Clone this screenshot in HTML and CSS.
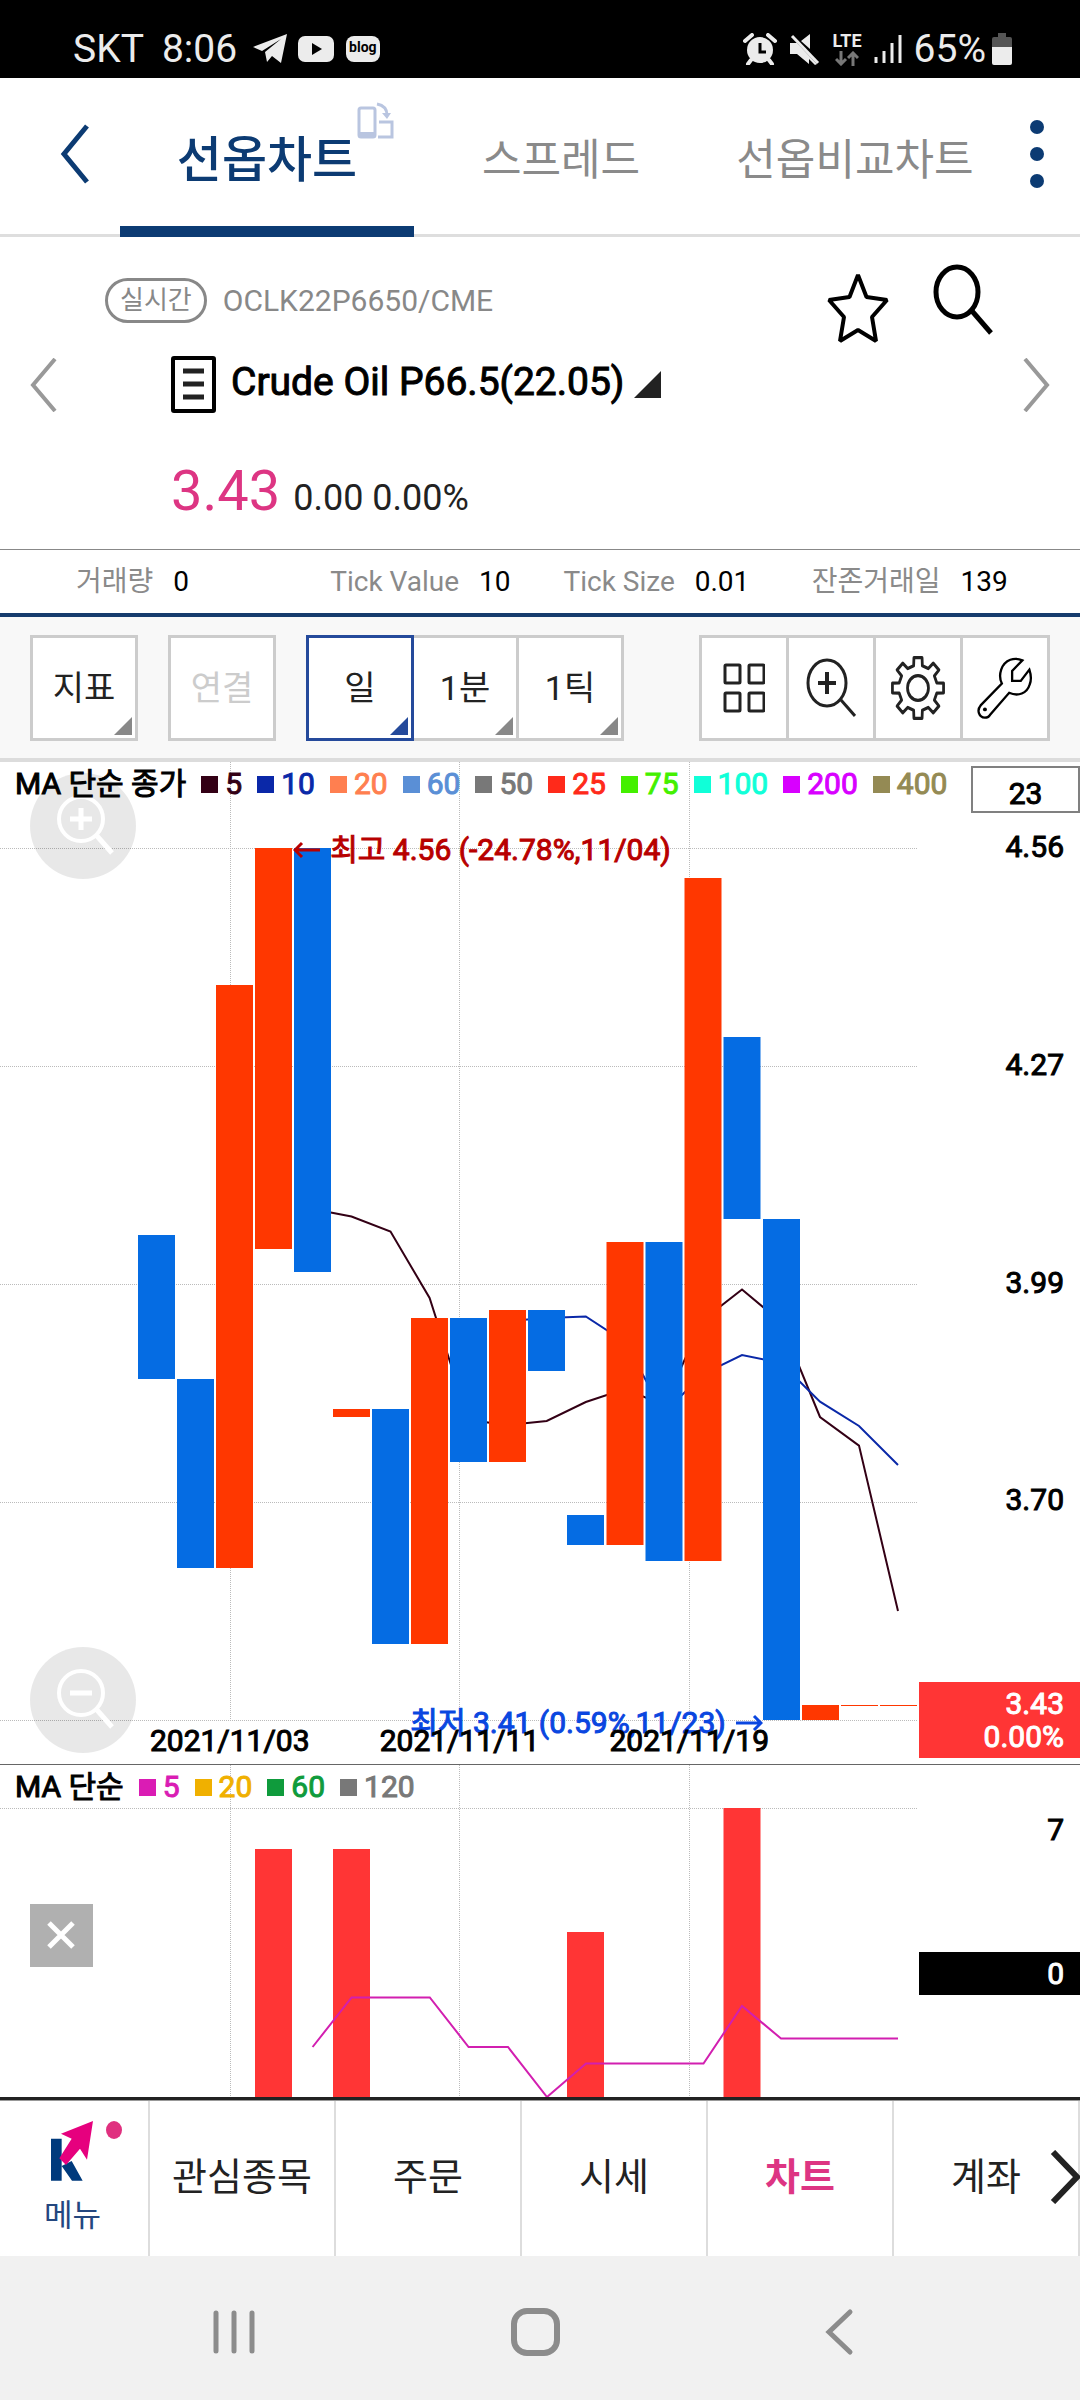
FILE: index.html
```html
<!DOCTYPE html>
<html lang="ko">
<head>
<meta charset="utf-8">
<meta name="viewport" content="width=device-width, initial-scale=1">
<title>선옵차트</title>
<link rel="stylesheet" href="styles.css">
</head>
<body>
<div class="app">
  <div class="status">
    <span>SKT</span>
    <span class="status-time">8:06</span>
    <svg class="status-telegram" width="35" height="30" viewBox="0 0 35 30"><path d="M34 0 28 29 19 22 14 28 12 18 28 5 9 17 0 13Z" fill="#ececec"/></svg>
    <svg class="status-youtube" width="36" height="28" viewBox="0 0 36 28"><rect y="1" width="36" height="26" rx="7" fill="#ececec"/><path d="M14 8 24 14 14 20Z" fill="#000"/></svg>
    <span class="blog">blog</span>
    <div class="status-right">
      <svg width="34" height="32" viewBox="0 0 34 32"><path d="M2 8 9 2M25 2l7 6M8 27l-3 4M26 27l3 4" stroke="#ececec" stroke-width="4" stroke-linecap="round"/><circle cx="17" cy="17" r="13" fill="#ececec"/><path d="M17 10v9h6" fill="none" stroke="#000" stroke-width="3"/></svg>
      <svg width="32" height="32" viewBox="0 0 32 32"><path d="M1 10h7L28 31 26 32 20 26V31L8 21H1ZM21 1V16L12 8Z" fill="#ececec"/><path d="M3 3 29 30" stroke="#ececec" stroke-width="3"/></svg>
      <span class="lte"><span>LTE</span><svg width="24" height="15" viewBox="0 0 24 15"><path d="M6 0v13M1 8l5 5 5-5M18 15V2M13 7l5-5 5 5" fill="none" stroke="#777" stroke-width="3"/></svg></span>
      <svg width="28" height="30" viewBox="0 0 28 30"><path d="M2 23v6M10 17v12M18 9v20M26 1v28" stroke="#ececec" stroke-width="3"/></svg>
      <span class="percent">65%</span>
      <svg width="20" height="32" viewBox="0 0 20 32"><path d="M6 0h8v4h4q2 0 2 2v8H0V6q0-2 2-2h4Z" fill="#555"/><path d="M0 14h20v16q0 2-2 2H2q-2 0-2-2Z" fill="#ececec"/></svg>
    </div>
  </div>

  <header class="tabs">
    <button class="back" aria-label="뒤로"><svg width="30" height="60" viewBox="0 0 30 60"><path d="M27 2 4 30 27 58" fill="none" stroke="#0c3b73" stroke-width="5"/></svg></button>
    <nav class="tab-list">
      <a class="tab active" href="#chart">선옵차트<svg class="rotate" width="38" height="38" viewBox="0 0 38 38"><g fill="none" stroke="#b9c5e0" stroke-width="3"><rect x="2" y="6" width="16" height="29" rx="2"/><path d="M22 20h13v15H21M20 2q10 2 10 11"/></g><path d="M2 30h16v5H2ZM25 11h9l-4 6Z" fill="#b9c5e0"/></svg></a>
      <a class="tab" href="#spread">스프레드</a>
      <a class="tab" href="#compare">선옵비교차트</a>
    </nav>
    <button class="more" aria-label="더보기"><svg width="14" height="68" viewBox="0 0 14 68" fill="#0c3b73"><circle cx="7" cy="7" r="7"/><circle cx="7" cy="34" r="7"/><circle cx="7" cy="61" r="7"/></svg></button>
  </header>

  <section class="quote">
    <div class="quote-top">
      <span class="badge">실시간</span>
      <span class="code">OCLK22P6650/CME</span>
      <button class="star" aria-label="관심종목 추가"><svg width="62" height="72" viewBox="0 0 62 72"><path d="M31 3 39.500 25 60 28 45 45 49 69 31 58 13 69 17 45 2 28 22.500 25Z" fill="none" stroke="#000" stroke-width="4" stroke-linejoin="bevel"/></svg></button>
      <button class="search" aria-label="검색"><svg width="61" height="72" viewBox="0 0 61 72"><g fill="none" stroke="#000" stroke-width="5"><ellipse cx="24" cy="28" rx="21" ry="25"/><path d="M39 47 58 69"/></g></svg></button>
    </div>
    <div class="quote-name">
      <button aria-label="이전 종목"><svg width="27" height="54" viewBox="0 0 27 54"><path d="M25 1 3 27 25 53" fill="none" stroke="#999" stroke-width="4"/></svg></button>
      <button class="symbol"><svg width="45" height="57" viewBox="0 0 45 57"><rect x="2" y="2" width="41" height="53" rx="1" fill="none" stroke="#000" stroke-width="4"/><path d="M12 15h21M12 28h21M12 41h21" stroke="#222" stroke-width="5"/></svg><span>Crude Oil P66.5(22.05)</span><svg class="symbol-corner" width="27" height="27" viewBox="0 0 27 27"><path d="M27 0V27H0Z" fill="#222"/></svg></button>
      <button aria-label="다음 종목"><svg width="27" height="54" viewBox="0 0 27 54"><path d="M2 1 24 27 2 53" fill="none" stroke="#999" stroke-width="4"/></svg></button>
    </div>
    <div class="quote-price"><strong>3.43</strong><span>0.00 0.00%</span></div>
  </section>

  <dl class="stats">
    <div><dt>거래량</dt><dd>0</dd></div>
    <div><dt>Tick Value</dt><dd>10</dd></div>
    <div><dt>Tick Size</dt><dd>0.01</dd></div>
    <div><dt>잔존거래일</dt><dd>139</dd></div>
  </dl>

  <div class="toolbar">
    <button class="tool corner">지표</button>
    <button class="tool" disabled>연결</button>
    <div class="periods">
      <button class="tool corner selected">일</button>
      <button class="tool corner">1분</button>
      <button class="tool corner">1틱</button>
    </div>
    <div class="icons">
      <button aria-label="분할"><svg width="42" height="50" viewBox="0 0 42 50"><g fill="none" stroke="#222" stroke-width="3"><rect x="2" y="2" width="15" height="18" rx="1"/><rect x="26" y="2" width="15" height="18" rx="1"/><rect x="2" y="30" width="15" height="18" rx="1"/><rect x="26" y="30" width="15" height="18" rx="1"/></g></svg></button>
      <button aria-label="확대"><svg width="50" height="60" viewBox="0 0 50 60"><g fill="none" stroke="#222" stroke-width="3"><ellipse cx="21" cy="25" rx="19" ry="23"/><path d="M35 42 49 58"/><path d="M21 14v22M12 25h18" stroke-width="4"/></g></svg></button>
      <button aria-label="설정"><svg width="54" height="64" viewBox="-49 -49 98 98" preserveAspectRatio="none"><g fill="none" stroke="#222" stroke-width="5" stroke-linejoin="round"><path d="M-7.400-46.400 7.400-46.400 7.900-34.100 18.500-29.700 27.600-38 38-27.600 29.700-18.500 34.100-7.900 46.400-7.400 46.400 7.400 34.100 7.900 29.700 18.500 38 27.600 27.600 38 18.500 29.700 7.900 34.100 7.400 46.400-7.400 46.400-7.900 34.100-18.500 29.700-27.600 38-38 27.600-29.700 18.500-34.100 7.900-46.400 7.400-46.400-7.400-34.100-7.900-29.700-18.500-38-27.600-27.600-38-18.500-29.700-7.900-34.100Z"/><circle r="19"/></g></svg></button>
      <button aria-label="도구"><svg width="56" height="62" viewBox="862 112 167 187"><path d="M998 122C975 112 945 118 934 150C928 168 930 180 936 192L872 258C860 272 866 294 885 295C893 295 898 290 900 287L958 220C985 232 1012 222 1020 195C1026 180 1024 165 1019 150L993 184H967V154Z" fill="none" stroke="#000" stroke-width="7"/><circle cx="885" cy="270" r="6"/></svg></button>
    </div>
  </div>

  <main class="charts">
    <section class="pane">
      <div class="plot">
        <svg class="canvas" viewBox="0 0 919 1002" preserveAspectRatio="none">
          <path class="grid" d="M230.500 0V958M459.500 0V958M689.500 0V958M0 86.500H917M0 304.500H917M0 522.500H917M0 740.500H917M0 958.500H917"/>
          <path class="line" stroke="#330015" d="M312.500 447 351.500 454.500 390.500 469.500 429.600 536 468.600 658 507.700 663 546.700 659 585.800 640 624.800 627 663.900 643 703 558 742 527.500 781 560 820 655 859 683.600 898 849"/>
          <path class="line" stroke="#0a28a8" d="M507.700 559 546.700 556 585.800 554.500 624.800 580 663.900 651 703 612 742 593 781 601 820 639.600 859 664 898 703"/>
          <g fill="#ff3700">
            <rect x="216" y="223" width="37" height="583"/><rect x="255" y="86" width="37" height="401"/><rect x="333" y="647" width="37" height="8"/><rect x="411" y="556" width="37" height="326"/><rect x="489" y="548" width="37" height="152"/><rect x="606.500" y="480" width="37" height="303"/><rect x="684.500" y="116" width="37" height="683"/><rect x="802" y="943" width="37" height="15"/><rect x="841" y="943" width="37" height="1"/><rect x="880" y="943" width="37" height="1"/>
          </g>
          <g fill="#056ce3">
            <rect x="138" y="473" width="37" height="144"/><rect x="177" y="617" width="37" height="189"/><rect x="294" y="86" width="37" height="424"/><rect x="372" y="647" width="37" height="235"/><rect x="450" y="556" width="37" height="144"/><rect x="528" y="548" width="37" height="61"/><rect x="567" y="753" width="37" height="30"/><rect x="645.500" y="480" width="37" height="319"/><rect x="723.500" y="275" width="37" height="182"/><rect x="763" y="457" width="37" height="501"/>
          </g>
        </svg>
        <button class="zoom zoom-in" aria-label="차트 확대"><svg width="106" height="106" viewBox="0 0 106 106"><g fill="none" stroke="#fff" stroke-width="4"><circle cx="51" cy="46" r="22"/><path d="M67 63 82 80M51 35v22M40 46h22" stroke-width="5"/></g></svg></button>
        <button class="zoom zoom-out" aria-label="차트 축소"><svg width="106" height="106" viewBox="0 0 106 106"><g fill="none" stroke="#fff" stroke-width="4"><circle cx="51" cy="46" r="22"/><path d="M67 63 82 80M40 46h22" stroke-width="5"/></g></svg></button>
        <div class="legend">
          <span class="legend-title">MA 단순 종가</span>
          <span class="ma c5">5</span><span class="ma c10">10</span><span class="ma c20">20</span><span class="ma c60">60</span><span class="ma c50">50</span><span class="ma c25">25</span><span class="ma c75">75</span><span class="ma c100">100</span><span class="ma c200">200</span><span class="ma c400">400</span>
        </div>
        <div class="note high"><svg width="28" height="18" viewBox="0 0 28 18"><path d="M27 9H2M9 2 2 9 9 16" fill="none" stroke="currentColor" stroke-width="3"/></svg>최고 4.56 (-24.78%,11/04)</div>
        <div class="note low">최저 3.41 (0.59%,11/23)<svg width="28" height="18" viewBox="0 0 28 18"><path d="M1 9H26M19 2 26 9 19 16" fill="none" stroke="currentColor" stroke-width="3"/></svg></div>
        <div class="dates"><span>2021/11/03</span><span>2021/11/11</span><span>2021/11/19</span></div>
      </div>
      <div class="axis">
        <span class="count">23</span>
        <span class="tick" style="top:8.5%">4.56</span>
        <span class="tick" style="top:30.2%">4.27</span>
        <span class="tick" style="top:52%">3.99</span>
        <span class="tick" style="top:73.7%">3.70</span>
        <span class="current">3.43<br>0.00%</span>
      </div>
    </section>
    <section class="pane volume">
      <div class="plot">
        <svg class="canvas" viewBox="0 0 919 332" preserveAspectRatio="none">
          <path class="grid" d="M230.500 0V332M459.500 0V332M689.500 0V332M0 43.500H917"/>
          <g fill="#ff3535"><rect x="255" y="84" width="37" height="248"/><rect x="333" y="84" width="37" height="248"/><rect x="567" y="167" width="37" height="165"/><rect x="723.500" y="43" width="37" height="289"/></g>
          <path class="line" stroke="#d21fb0" d="M312.600 282 351.600 232.500H429.800L468.600 282H508L547 332 586 298.500H703.500L742 241 781 273.500H898"/>
        </svg>
        <div class="legend">
          <span class="legend-title">MA 단순</span>
          <span class="ma v5">5</span><span class="ma v20">20</span><span class="ma v60">60</span><span class="ma v120">120</span>
        </div>
        <button class="close" aria-label="닫기"><svg width="63" height="63" viewBox="0 0 63 63"><path d="M19 19 43 43M43 19 19 43" stroke="#fff" stroke-width="5"/></svg></button>
      </div>
      <div class="axis">
        <span class="tick" style="top:19.5%">7</span>
        <span class="zero">0</span>
      </div>
    </section>
  </main>

  <nav class="bottom">
    <a class="menu" href="#menu"><svg width="72" height="64" viewBox="0 0 72 64"><g transform="scale(.3333) translate(-63 -65)"><path d="M63 118H95V200L125 185 158 244H126L95 200V244H63Z" fill="#003a7c"/><path d="M189 65 171 181 150 148 108 197 88 177 125 118 93 103Z" fill="#e6007e"/></g><ellipse cx="63" cy="9" rx="8" ry="9" fill="#e0307f"/></svg><span>메뉴</span></a>
    <a href="#watch">관심종목</a>
    <a href="#order">주문</a>
    <a href="#price">시세</a>
    <a class="current-menu" href="#chart">차트</a>
    <a href="#account">계좌</a>
    <button class="next" aria-label="다음 메뉴"><svg width="30" height="54" viewBox="0 0 30 54"><path d="M3 2 27 27 3 52" fill="none" stroke="#222" stroke-width="6"/></svg></button>
  </nav>

  <div class="system">
    <button aria-label="최근 앱"><svg width="44" height="48" viewBox="0 0 44 48"><path d="M4 5v38M22 5v38M40 5v38" stroke="#8c8c8c" stroke-width="5" stroke-linecap="round"/></svg></button>
    <button class="home" aria-label="홈"><svg width="50" height="50" viewBox="0 0 50 50"><rect x="4" y="4" width="43" height="42" rx="13" fill="none" stroke="#8c8c8c" stroke-width="6"/></svg></button>
    <button aria-label="이전"><svg width="30" height="48" viewBox="0 0 30 48"><path d="M26 4 5 24 26 44" fill="none" stroke="#8c8c8c" stroke-width="5" stroke-linecap="round"/></svg></button>
  </div>
</div>
</body>
</html>
```
FILE: styles.css
```css
* { box-sizing: border-box; }
body { margin: 0; background: #fff; color: #000; font-family: Roboto, "Noto Sans CJK KR", sans-serif; }
button { margin: 0; padding: 0; border: 0; background: none; font: inherit; color: inherit; }
a { color: inherit; text-decoration: none; }
svg { display: block; flex: none; }
.app { display: flex; flex-direction: column; min-height: 100vh; }

/* status bar */
.status { display: flex; align-items: center; padding: 26px 68px 6px 73px; background: #000; color: #ececec; font-size: 39px; line-height: 46px; }
.status-time { margin: 0 16px 0 18px; }
.status-telegram { margin-right: 10px; }
.status-youtube { margin-right: 12px; }
.blog { padding: 0 3px 4px; border-radius: 8px; background: #ececec; color: #000; font-size: 14px; font-weight: 700; line-height: 22px; }
.status-right { display: flex; align-items: center; margin-left: auto; gap: 12px; }
.lte { display: flex; flex-direction: column; align-items: center; gap: 2px; font-size: 18px; font-weight: 700; line-height: 17px; }
.percent { margin-right: -6px; }

/* header tabs */
.tabs { display: flex; border-bottom: 3px solid #dedede; }
.back { display: flex; align-items: center; width: 120px; padding: 0 0 4px 60px; }
.more { display: flex; align-items: center; width: 78px; padding: 0 0 4px 28px; }
.tab-list { display: flex; flex: 1; margin-bottom: -3px; }
.tab { display: flex; flex: 1; align-items: center; justify-content: center; padding: 52px 0 35px; border-bottom: 11px solid transparent; color: #8a8a8a; font-size: 43px; line-height: 61px; white-space: nowrap; }
.tab.active { position: relative; border-color: #0c3b73; color: #0c3b73; font-size: 49px; font-weight: 500; }
.rotate { position: absolute; right: 19px; top: 24px; }

/* instrument */
.quote { padding: 27px 0 18px; border-bottom: 1px solid #888; }
.quote-top { display: flex; align-items: flex-start; padding: 0 86px 0 105px; }
.badge { margin-top: 14px; padding: 0 12px; border: 3px solid #888; border-radius: 23px; color: #888; font-size: 26px; line-height: 39px; }
.code { margin: 14px auto 0 16px; color: #888; font-size: 30px; line-height: 45px; }
.star { margin: 8px 44px 0 0; }
.quote-name { display: flex; align-items: center; margin-top: 12px; padding: 0 30px; }
.symbol { display: flex; align-items: center; margin: 0 auto 0 114px; font-size: 39px; line-height: 47px; -webkit-text-stroke: 1px #000; }
.symbol span { margin: 0 10px 5px 15px; }
.quote-price { display: flex; align-items: baseline; gap: 13px; margin-top: 45px; padding-left: 171px; color: #222; font-size: 36px; line-height: 66px; }
.quote-price strong { color: #dd3583; font-size: 56px; font-weight: 400; }

.stats { display: grid; grid-template-columns: 254fr 233fr 248fr 268fr; margin: 0; padding: 11px 0 11px 76px; border-bottom: 4px solid #163c6d; font-size: 28px; line-height: 41px; white-space: nowrap; }
.stats div { display: flex; gap: 20px; }
.stats dt { color: #8a8a8a; }
.stats dd { margin: 0; }

/* chart toolbar */
.toolbar { display: flex; gap: 30px; padding: 18px 30px 17px; border-bottom: 4px solid #dcdcdc; background: #f8f8f8; }
.tool { position: relative; width: 108px; border: 3px solid #ccc; background: #fff; color: #222; font-size: 34px; line-height: 100px; }
.tool:disabled { color: #ccc; }
.corner::after { content: ""; position: absolute; right: 3px; bottom: 3px; width: 18px; height: 18px; background: #888; clip-path: polygon(100% 0, 100% 100%, 0 100%); }
.periods { display: flex; }
.periods .tool { width: 105px; border-left: 0; }
.periods .selected { width: 108px; border: 3px solid #254a9b; }
.selected::after { background: #254a9b; }
.icons { display: flex; margin-left: auto; border: 3px solid #ccc; background: #fff; }
.icons button { display: flex; align-items: center; justify-content: center; width: 87px; border-right: 3px solid #ccc; }
.icons button:last-child { width: 84px; border-right: 0; }

/* charts */
.charts { display: grid; flex: 1; grid-template-rows: 1003fr 332fr; min-height: 900px; border-bottom: 3px solid #222; font-size: 30px; line-height: 36px; -webkit-text-stroke: 1px currentColor; }
.pane { display: grid; grid-template-columns: minmax(0, 1fr) 161px; border-bottom: 1px solid #666; }
.volume { border-bottom: 0; }
.plot, .axis { position: relative; }
.canvas { position: absolute; inset: 0; width: 100%; height: 100%; }
.grid { fill: none; stroke: #bbb; stroke-dasharray: 1 1; shape-rendering: crispEdges; }
.line { fill: none; stroke-width: 2; }
.legend { position: relative; display: flex; gap: 15px; padding: 4px 0 0 15px; white-space: nowrap; }
.ma { display: flex; align-items: center; gap: 7px; -webkit-text-stroke-color: currentColor; }
.ma::before { content: ""; width: 17px; height: 17px; background: currentColor; }
.c5 { color: #330015; } .c10 { color: #0a28a8; } .c20 { color: #ff7f50; } .c60 { color: #5a8fd6; } .c50 { color: #787878; }
.c25 { color: #ff2a1a; } .c75 { color: #44f000; } .c100 { color: #10ffd8; } .c200 { color: #d800ff; } .c400 { color: #948a54; }
.v5 { color: #da1cb4; } .v20 { color: #f0b000; } .v60 { color: #0f9b3c; } .v120 { color: #787878; }
.zoom { position: absolute; left: 30px; border-radius: 50%; background: rgba(0, 0, 0, .09); }
.zoom-in { top: 11px; }
.zoom-out { bottom: 11px; }
.note { position: absolute; display: flex; align-items: center; gap: 9px; white-space: nowrap; -webkit-text-stroke-color: currentColor; }
.high { left: 31.9%; top: 7%; color: #b80000; }
.low { right: 17%; bottom: 2.3%; color: #0a46e0; }
.dates { position: absolute; left: 12.5%; right: 12.5%; bottom: 5px; display: grid; grid-template-columns: repeat(3, 1fr); text-align: center; }
.axis { text-align: right; }
.count { display: block; margin: 4px 0 0 52px; padding: 9px 0 0; border: 2px solid #808080; line-height: 34px; text-align: center; }
.tick { position: absolute; right: 16px; transform: translateY(-50%); }
.current { position: absolute; left: 0; right: 0; bottom: 6px; padding: 5px 16px; background: #ff3535; color: #fff; line-height: 33px; -webkit-text-stroke-color: currentColor; }
.zero { position: absolute; left: 0; right: 0; top: 56.3%; padding: 4px 16px 3px; background: #000; color: #fff; -webkit-text-stroke-color: currentColor; }
.close { position: absolute; left: 30px; top: 42%; background: #b0b0b0; }

/* app menu */
.bottom { position: relative; display: grid; grid-template-columns: 150fr repeat(5, 186fr); border-top: 1px solid #999; color: #222; font-size: 38px; line-height: 56px; }
.bottom a { padding: 48px 0 51px; border-right: 2px solid #ddd; text-align: center; white-space: nowrap; }
.bottom .menu { display: flex; flex-direction: column; padding: 20px 0 0 51px; color: #24477f; font-size: 31px; line-height: 46px; text-align: left; }
.menu span { margin: 8px 0 0 -7px; }
.bottom .current-menu { color: #dd3583; font-weight: 700; }
.next { position: absolute; right: 0; top: 49px; }

.system { display: flex; align-items: center; justify-content: space-between; padding: 51px 226px 43px 212px; background: #f1f1f1; }
.home { margin-right: 10px; }
```
